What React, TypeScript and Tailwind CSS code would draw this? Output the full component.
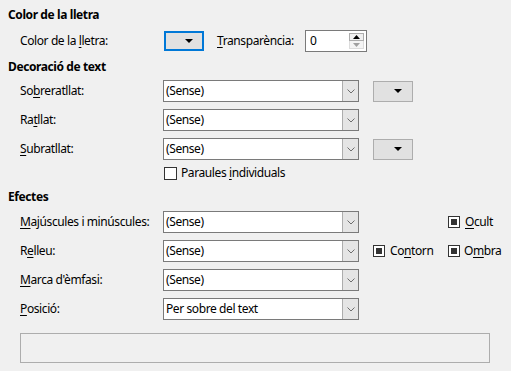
import React from "react";

const U = ({ children }: { children: React.ReactNode }) => (
  <span className="underline underline-offset-[2px] decoration-[1px]">{children}</span>
);

const Chevron = () => (
  <svg width="8" height="5" viewBox="0 0 8 5" className="block">
    <path d="M0.5 0.5 L4 4 L7.5 0.5" fill="none" stroke="#6d6d6d" strokeWidth="1" />
  </svg>
);

const Select = ({ value }: { value: string }) => (
  <div className="shrink-0 w-[196px] h-[22px] border border-[#7a7a7a] bg-white flex items-stretch">
    <div className="flex-1 pl-[2px] flex items-center leading-none whitespace-nowrap">{value}</div>
    <div className="w-[16px] bg-[#e5e5e5] border-l border-[#adadad] flex items-center justify-center">
      <Chevron />
    </div>
  </div>
);

const TriDown = () => (
  <svg width="8" height="4" viewBox="0 0 8 4" className="block">
    <path d="M0 0 H8 L4 4 Z" fill="#000" />
  </svg>
);

const ColorBtn = ({ focused }: { focused?: boolean }) => (
  <div
    className={
      focused
        ? "shrink-0 w-[40px] h-[20px] border-2 border-[#0078d7] bg-[#e1e1e1] flex items-center justify-end pr-[9px]"
        : "shrink-0 w-[40px] h-[21px] border border-[#adadad] bg-[#e1e1e1] flex items-center justify-end pr-[10px]"
    }
  >
    <TriDown />
  </div>
);

const Check = ({ checked }: { checked?: boolean }) => (
  <div
    className={
      checked
        ? "shrink-0 w-[12px] h-[12px] border border-[#333333] bg-white flex items-center justify-center"
        : "shrink-0 w-[13px] h-[13px] border border-[#333333] bg-white"
    }
  >
    {checked ? <div className="w-[6px] h-[6px] bg-[#333333]" /> : null}
  </div>
);

const Row = ({
  label,
  value,
  children,
}: {
  label: React.ReactNode;
  value: string;
  children?: React.ReactNode;
}) => (
  <div className="h-[22px] flex items-center">
    <div className="shrink-0 w-[163px] pl-[20px] whitespace-nowrap">{label}</div>
    <Select value={value} />
    {children}
  </div>
);

export default function App() {
  return (
    <div
      className="w-[511px] h-[371px] bg-[#f0f0f0] text-black text-[12px] tracking-[-0.4px] leading-none flex flex-col pt-[6px] whitespace-nowrap"
      style={{ fontFamily: '"Noto Sans", "Open Sans", sans-serif' }}
    >
      <div className="h-[18px] pl-[8px] flex items-center font-bold">Color de la lletra</div>
      <div className="mt-[6px] h-[22px] flex items-center">
        <div className="shrink-0 w-[164px] pl-[20px]">
          Color de la <U>l</U>letra:
        </div>
        <ColorBtn focused />
        <div className="shrink-0 ml-[13px] w-[88px]">
          <U>T</U>ransparència:
        </div>
        <div className="shrink-0 w-[62px] h-[22px] border border-[#7a7a7a] bg-white flex items-center">
          <div className="flex-1 pl-[4px]">0</div>
          <div className="w-[15px] mr-[2px] flex flex-col">
            <div className="h-[8px] border border-[#adadad] bg-[#f0f0f0] flex items-center justify-center">
              <svg width="7" height="4" viewBox="0 0 7 4" className="block">
                <path d="M0 4 H7 L3.5 0 Z" fill="#000" />
              </svg>
            </div>
            <div className="h-[8px] border border-[#dcdcdc] border-t-0 bg-[#f4f4f4] flex items-center justify-center">
              <svg width="7" height="4" viewBox="0 0 7 4" className="block">
                <path d="M0 0 H7 L3.5 4 Z" fill="#a0a0a0" />
              </svg>
            </div>
          </div>
        </div>
      </div>

      <div className="mt-[6px] h-[18px] pl-[8px] flex items-center font-bold">Decoració de text</div>
      <div className="mt-[4px] flex flex-col gap-[7px]">
        <Row label={<>So<U>b</U>reratllat:</>} value="(Sense)">
          <div className="ml-[14px]">
            <ColorBtn />
          </div>
        </Row>
        <Row label={<>Ra<U>t</U>llat:</>} value="(Sense)" />
        <Row label={<><U>S</U>ubratllat:</>} value="(Sense)">
          <div className="ml-[14px]">
            <ColorBtn />
          </div>
        </Row>
      </div>
      <div className="mt-[6px] h-[14px] pl-[164px] flex items-center gap-[4px]">
        <Check />
        <span>
          Paraules <U>i</U>ndividuals
        </span>
      </div>

      <div className="mt-[8px] h-[18px] pl-[8px] flex items-center font-bold">Efectes</div>
      <div className="mt-[5px] flex flex-col gap-[7px]">
        <Row label={<><U>M</U>ajúscules i minúscules:</>} value="(Sense)">
          <div className="ml-[89px] flex items-center gap-[5px]">
            <Check checked />
            <span>
              <U>O</U>cult
            </span>
          </div>
        </Row>
        <Row label={<>R<U>e</U>lleu:</>} value="(Sense)">
          <div className="shrink-0 ml-[14px] flex items-center gap-[5px] w-[75px]">
            <Check checked />
            <span>
              Co<U>n</U>torn
            </span>
          </div>
          <div className="flex items-center gap-[4px]">
            <Check checked />
            <span>
              O<U>m</U>bra
            </span>
          </div>
        </Row>
        <Row label={<><U>M</U>arca d'èmfasi:</>} value="(Sense)" />
        <Row label={<><U>P</U>osició:</>} value="Per sobre del text" />
      </div>

      <div className="mt-[13px] ml-[20px] w-[470px] h-[30px] border border-[#adadad]" />
    </div>
  );
}
